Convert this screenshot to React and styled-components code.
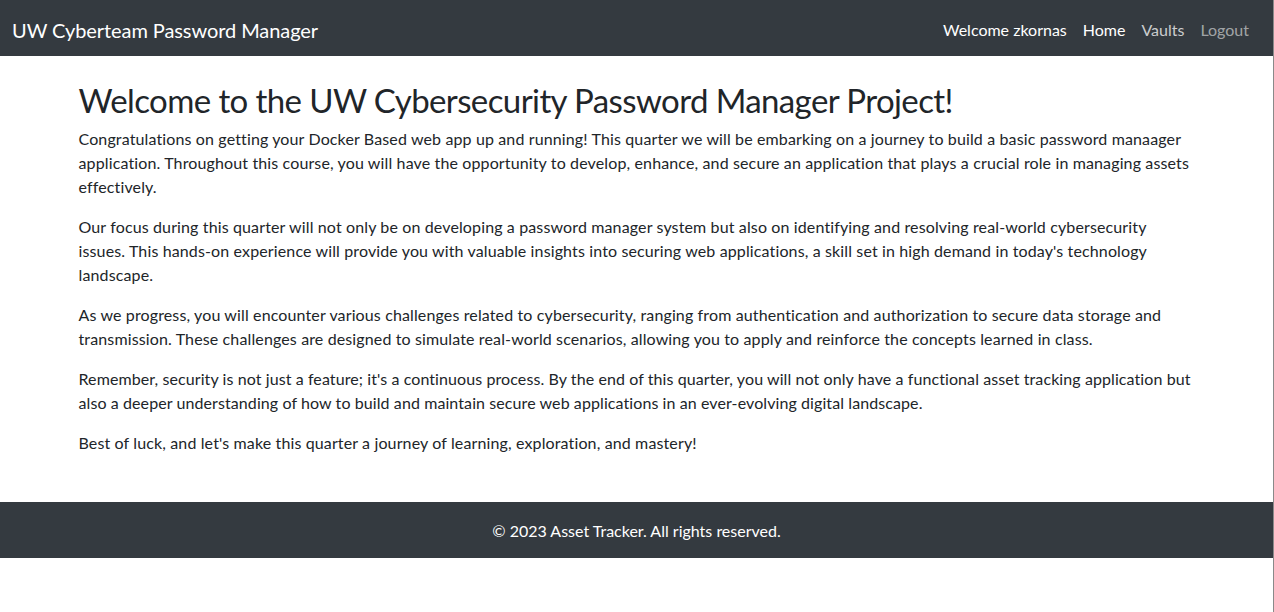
import React from "react";
import styled, { createGlobalStyle } from "styled-components";

const GlobalStyle = createGlobalStyle`
  html, body { margin: 0; padding: 0; background: #fff; }
  body {
    font-family: Lato, "Open Sans", sans-serif;
    font-size: 16px;
    line-height: 1.5;
    color: #212529;
    letter-spacing: 0.13px;
  }
  *, *::before, *::after { box-sizing: border-box; }
`;

const Page = styled.div`
  width: 100%;
  min-height: 100vh;
  border-right: 1px solid #8a8a8a;
`;

const Navbar = styled.nav`
  height: 56px;
  background: #343a40;
  display: flex;
  align-items: center;
  justify-content: space-between;
  padding: 4px 16px 0 12px;
`;

const Brand = styled.a`
  font-size: 20px;
  line-height: 30px;
  color: #fff;
  text-decoration: none;
  letter-spacing: -0.08px;
`;

const NavList = styled.ul`
  display: flex;
  list-style: none;
  margin: 0;
  padding: 0;
`;

const NavLink = styled.a`
  display: block;
  padding: 8px;
  line-height: 24px;
  text-decoration: none;
  letter-spacing: 0;
  color: ${(p) => p.$color};
`;

const Main = styled.main`
  max-width: 1140px;
  margin: 0 auto;
  padding: 24px 12px 0;
`;

const Title = styled.h1`
  font-size: 33px;
  font-weight: 400;
  line-height: 40px;
  margin: 0 0 7px;
  letter-spacing: -0.6px;
`;

const Para = styled.p`
  margin: 0 0 16px;
  letter-spacing: ${(p) => p.$spacing ?? 0.13}px;
  &:last-child { margin-bottom: 0; }
`;

const Footer = styled.footer`
  margin-top: 47px;
  height: 56px;
  padding-top: 2px;
  background: #343a40;
  color: #fff;
  letter-spacing: 0;
  display: flex;
  align-items: center;
  justify-content: center;
`;

const links = [
  { label: "Welcome zkornas", color: "#fff" },
  { label: "Home", color: "#fff" },
  { label: "Vaults", color: "rgba(255,255,255,0.75)" },
  { label: "Logout", color: "rgba(255,255,255,0.55)" },
];

const paragraphs = [
  { text: "Congratulations on getting your Docker Based web app up and running! This quarter we will be embarking on a journey to build a basic password manaager application. Throughout this course, you will have the opportunity to develop, enhance, and secure an application that plays a crucial role in managing assets effectively." },
  { text: "Our focus during this quarter will not only be on developing a password manager system but also on identifying and resolving real-world cybersecurity issues. This hands-on experience will provide you with valuable insights into securing web applications, a skill set in high demand in today's technology landscape." },
  { text: "As we progress, you will encounter various challenges related to cybersecurity, ranging from authentication and authorization to secure data storage and transmission. These challenges are designed to simulate real-world scenarios, allowing you to apply and reinforce the concepts learned in class." },
  { text: "Remember, security is not just a feature; it's a continuous process. By the end of this quarter, you will not only have a functional asset tracking application but also a deeper understanding of how to build and maintain secure web applications in an ever-evolving digital landscape.", spacing: 0.09 },
  { text: "Best of luck, and let's make this quarter a journey of learning, exploration, and mastery!" },
];

export default function App() {
  return (
    <>
      <GlobalStyle />
      <Page>
        <Navbar>
          <Brand href="#">UW Cyberteam Password Manager</Brand>
          <NavList>
            {links.map((l) => (
              <li key={l.label}>
                <NavLink href="#" $color={l.color}>{l.label}</NavLink>
              </li>
            ))}
          </NavList>
        </Navbar>
        <Main>
          <Title>Welcome to the UW Cybersecurity Password Manager Project!</Title>
          {paragraphs.map((p, i) => (
            <Para key={i} $spacing={p.spacing}>{p.text}</Para>
          ))}
        </Main>
        <Footer>© 2023 Asset Tracker. All rights reserved.</Footer>
      </Page>
    </>
  );
}
